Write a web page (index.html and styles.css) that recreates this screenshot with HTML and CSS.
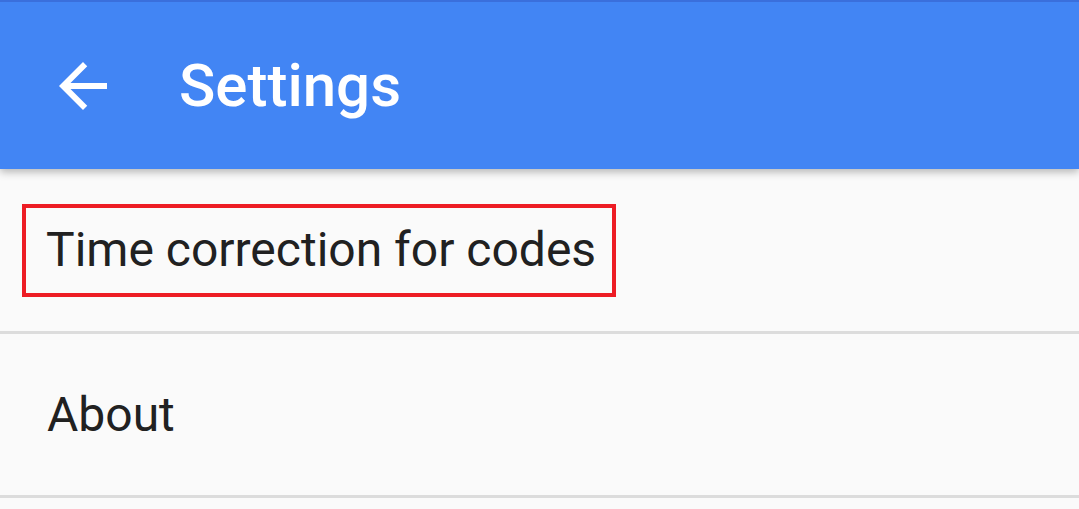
FILE: index.html
```html
<!DOCTYPE html>
<html>
<head>
<meta charset="utf-8">
<link rel="stylesheet" href="styles.css">
</head>
<body>
<header class="toolbar">
  <svg class="back" viewBox="0 0 24 24" width="72" height="72" aria-hidden="true">
    <path fill="#fff" d="M20 11H7.83l5.59-5.59L12 4l-8 8 8 8 1.41-1.41L7.83 13H20v-2z"/>
  </svg>
  <h1 class="title">Settings</h1>
</header>
<ul class="list">
  <li class="item"><span class="label highlight">Time correction for codes</span></li>
  <li class="item"><span class="label">About</span></li>
</ul>
</body>
</html>
```
FILE: styles.css
```css
html, body {
  margin: 0;
  padding: 0;
  background: #fafafa;
  font-family: Roboto, "Noto Sans", sans-serif;
}
.toolbar {
  position: relative;
  z-index: 1;
  display: flex;
  align-items: center;
  height: 167px;
  background: #4285f4;
  border-top: 2px solid #3a6fdc;
  box-shadow: 0 3px 8px rgba(0, 0, 0, 0.28);
}
.back {
  display: block;
  margin-left: 47px;
  flex: none;
}
.title {
  margin: 0 0 0 60px;
  color: #fff;
  font-size: 60px;
  font-weight: 500;
  line-height: 1;
}
.list {
  list-style: none;
  margin: 0;
  padding: 0;
}
.item {
  display: flex;
  align-items: center;
  height: 165px;
  padding-left: 47px;
  border-bottom: 3px solid #dcdcdc;
  box-sizing: border-box;
}
.item + .item {
  height: 164px;
}
.label {
  color: #212121;
  font-size: 48px;
  line-height: 1;
}
.highlight {
  margin-left: -25px;
  padding: 18px 16px 19px 20px;
  border: 4px solid #ed1c24;
}
```
